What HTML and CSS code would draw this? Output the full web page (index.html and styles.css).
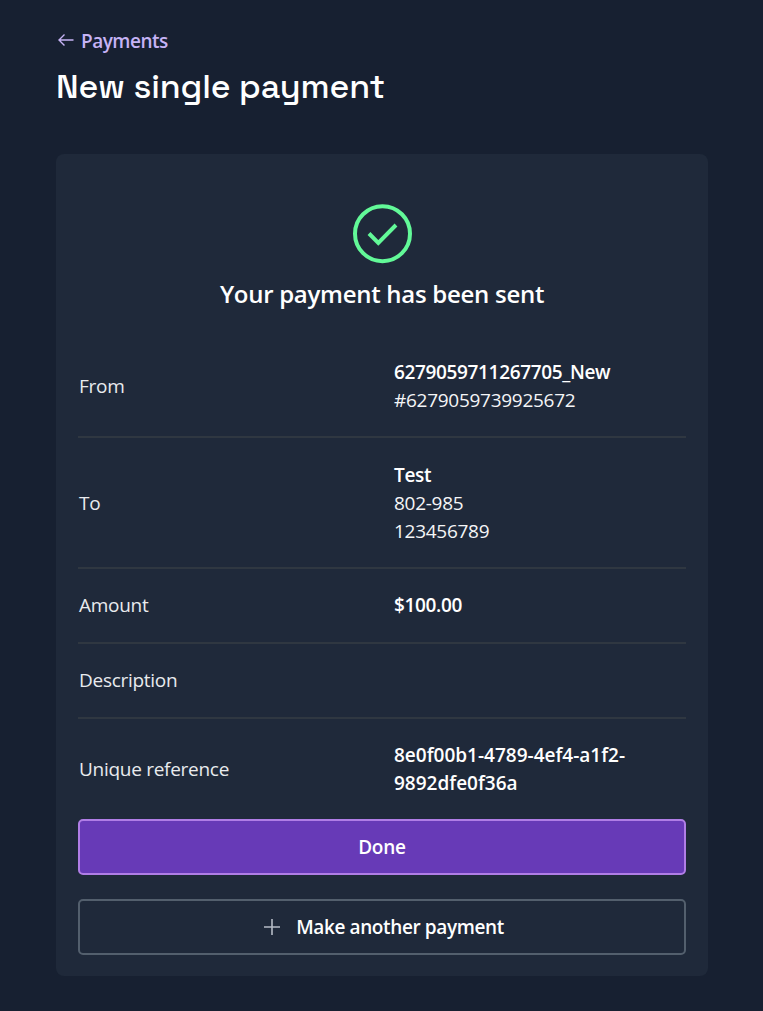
FILE: index.html
```html
<!doctype html>
<html lang="en">
<head>
    <meta charset="utf-8">
    <meta name="viewport" content="width=device-width, initial-scale=1">
    <title>New single payment</title>
    <link rel="stylesheet" href="styles.css">
</head>
<body>
    <div class="page">
        <!-- Header -->
        <a href="#" class="back-link">
            <svg class="back-icon" width="18" height="14" viewBox="0 0 18 14" fill="none" stroke="currentColor" stroke-width="1.4">
                <path d="M16.5 7H2M7.5 1.5L2 7l5.5 5.5"/>
            </svg>
            <span>Payments</span>
        </a>
        <h1 class="title">New single payment</h1>

        <!-- Payment receipt -->
        <div class="card">
            <svg class="success-icon" width="60" height="60" viewBox="0 0 60 60" fill="none" stroke="currentColor" stroke-width="4">
                <circle cx="30.5" cy="29.7" r="27.5"/>
                <path d="M17 29.5l9.3 9.3L44 21"/>
            </svg>
            <h2 class="subtitle">Your payment has been sent</h2>

            <dl class="details">
                <div class="row">
                    <dt>From</dt>
                    <dd><strong>6279059711267705_New</strong><br>#6279059739925672</dd>
                </div>
                <div class="row">
                    <dt>To</dt>
                    <dd><strong>Test</strong><br>802-985<br>123456789</dd>
                </div>
                <div class="row">
                    <dt>Amount</dt>
                    <dd><strong>$100.00</strong></dd>
                </div>
                <div class="row">
                    <dt>Description</dt>
                    <dd></dd>
                </div>
                <div class="row">
                    <dt>Unique reference</dt>
                    <dd><strong class="reference">8e0f00b1-4789-4ef4-a1f2-<br>9892dfe0f36a</strong></dd>
                </div>
            </dl>

            <button type="button" class="button button-primary">Done</button>
            <button type="button" class="button button-outline">
                <svg width="16" height="16" viewBox="0 0 16 16" fill="none" stroke="#b5bbc6" stroke-width="1.6">
                    <path d="M8 0v16M0 8h16"/>
                </svg>
                <span>Make another payment</span>
            </button>
        </div>
    </div>
</body>
</html>
```
FILE: styles.css
```css
:root {
    --background-color: #172031;
    --card-bg: #1f293a;
    --text-color: #e9ebee;
    --link-color: #c6b3f5;
    --success-color: #62f998;
    --button-bg: #673ab7;
    --button-border: #b07de6;
    --border-color: #2f3741;
    --outline-color: #535f6d;
}

* {
    box-sizing: border-box;
}

body {
    background-color: var(--background-color);
    color: var(--text-color);
    font-family: "Segoe UI", "Open Sans", sans-serif;
    font-size: 19px;
    line-height: 28px;
    letter-spacing: -0.28px;
    margin: 0;
}

.page {
    padding: 27px 55px 35px 56px;
}

.back-link {
    display: flex;
    align-items: center;
    gap: 6px;
    padding-left: 1px;
    color: var(--link-color);
    font-weight: 600;
    letter-spacing: -0.5px;
    text-decoration: none;
}

.back-icon {
    margin-top: -3px;
}

.title {
    color: #fff;
    font-family: "Space Grotesk", Inter, sans-serif;
    font-size: 34px;
    font-weight: 500;
    line-height: 44px;
    letter-spacing: -0.12px;
    margin: 10px 0 45px;
}

.card {
    display: flex;
    flex-direction: column;
    background-color: var(--card-bg);
    border-radius: 8px;
    padding: 50px 22px 21px;
}

.success-icon {
    align-self: center;
    color: var(--success-color);
}

.subtitle {
    color: #fff;
    font-size: 24px;
    font-weight: 600;
    line-height: 32px;
    text-align: center;
    margin: 14px 0 26px;
}

.details {
    margin: 0;
}

.row {
    display: grid;
    grid-template-columns: 315px 1fr;
    align-items: center;
    min-height: 75px;
    padding: 22px 0 23px;
    border-bottom: 2px solid var(--border-color);
}

.row:first-child {
    padding-bottom: 22px;
}

.row:nth-child(2) {
    padding: 23px 0 22px;
}

.row:last-child {
    border-bottom: none;
    padding-bottom: 22px;
}

dt {
    padding-left: 1px;
}

dd {
    color: #f4f5f7;
    margin: 0;
    padding-left: 1px;
}

strong {
    color: #fff;
    font-weight: 600;
    letter-spacing: -0.35px;
}

.reference {
    letter-spacing: 0;
}

.button {
    display: flex;
    align-items: center;
    justify-content: center;
    gap: 16px;
    height: 56px;
    border-radius: 5px;
    color: #fff;
    font-family: inherit;
    font-size: 19px;
    font-weight: 600;
    letter-spacing: -0.2px;
    cursor: pointer;
}

.button-primary {
    background-color: var(--button-bg);
    border: 2px solid var(--button-border);
    margin-bottom: 24px;
}

.button-outline {
    background-color: transparent;
    border: 2px solid var(--outline-color);
    letter-spacing: -0.38px;
    padding-left: 10px;
}
```
